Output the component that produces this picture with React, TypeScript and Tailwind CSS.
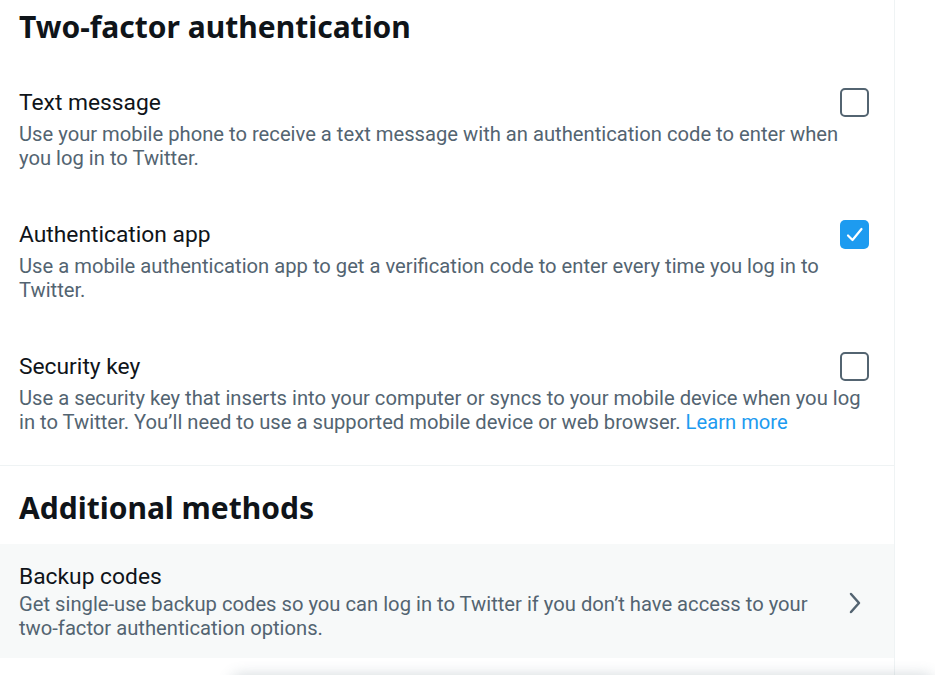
import React from 'react';

// Two-factor authentication settings panel
const methods = [
  {
    id: 'sms',
    title: 'Text message',
    description: 'Use your mobile phone to receive a text message with an authentication code to enter when you log in to Twitter.',
    checked: false,
    learnMore: false,
  },
  {
    id: 'app',
    title: 'Authentication app',
    description: 'Use a mobile authentication app to get a verification code to enter every time you log in to Twitter.',
    checked: true,
    learnMore: false,
  },
  {
    id: 'key',
    title: 'Security key',
    description:
      'Use a security key that inserts into your computer or syncs to your mobile device when you log in to Twitter. You\u2019ll need to use a supported mobile device or web browser.',
    checked: false,
    learnMore: true,
  },
];

const Checkbox: React.FC<{ checked: boolean }> = ({ checked }) =>
  checked ? (
    <div className="w-[29px] h-[29px] rounded-[5px] bg-[#1d9bf0] flex items-center justify-center">
      <svg width="29" height="29" viewBox="0 0 29 29" fill="none">
        <path d="M8 15.5 L12.5 20 L21.5 9" stroke="#fff" strokeWidth="2.2" strokeLinecap="round" strokeLinejoin="round" />
      </svg>
    </div>
  ) : (
    <div className="w-[29px] h-[29px] rounded-[5px] border-[2.5px] border-[#536471]" />
  );

const heading = 'text-[30px] leading-[34px] font-bold font-["Noto_Sans",sans-serif]';

const App: React.FC = () => {
  return (
    <div
      className="relative w-[935px] h-[675px] overflow-hidden bg-white text-[#0f1419]"
      style={{ fontFamily: 'Roboto, "Noto Sans", sans-serif' }}
    >
      <div className="w-[895px] h-full border-r border-[#eff3f4]">
        {/* Heading */}
        <div className="px-[19px] pt-[10px] pb-[19px]">
          <h2 className={heading}>Two-factor authentication</h2>
        </div>

        {/* Method list */}
        <div className="pb-[6px]">
          {methods.map((m) => (
            <div key={m.id} className="px-[19px] py-[25px]">
              <div className="flex items-center justify-between h-[29px] pr-[6px]">
                <span className="text-[22.8px] leading-[25px]">{m.title}</span>
                <Checkbox checked={m.checked} />
              </div>
              <p className="mt-[5px] text-[20.2px] leading-[24px] text-[#536471]">
                {m.description}
                {m.learnMore && (
                  <>
                    {' '}
                    <span className="text-[#1d9bf0]">Learn more</span>
                  </>
                )}
              </p>
            </div>
          ))}
        </div>

        <div className="border-t border-[#eff3f4]" />

        {/* Additional methods */}
        <div className="px-[19px] pt-[25px] pb-[19px]">
          <h2 className={heading}>Additional methods</h2>
        </div>

        <div className="flex items-center bg-[#f7f9f9] pl-[19px] pr-[33px] pt-[21px] pb-[18px]">
          <div className="flex-1">
            <div className="text-[22.8px] leading-[24px]">Backup codes</div>
            <p className="mt-[3px] text-[20.2px] leading-[24px] text-[#536471] pr-[30px]">
              Get single-use backup codes so you can log in to Twitter if you don&rsquo;t have access to your two-factor authentication options.
            </p>
          </div>
          <svg width="12" height="22" viewBox="0 0 12 22" fill="none">
            <path d="M2 2 L10 11 L2 20" stroke="#536471" strokeWidth="2.5" strokeLinecap="round" strokeLinejoin="round" />
          </svg>
        </div>
      </div>

      {/* shadow of a floating drawer peeking at the bottom */}
      <div className="absolute left-[230px] right-0 bottom-[-12px] h-[12px] rounded-t-[16px] shadow-[0_0_14px_rgba(101,119,134,0.3)] bg-white" />
    </div>
  );
};

export default App;
